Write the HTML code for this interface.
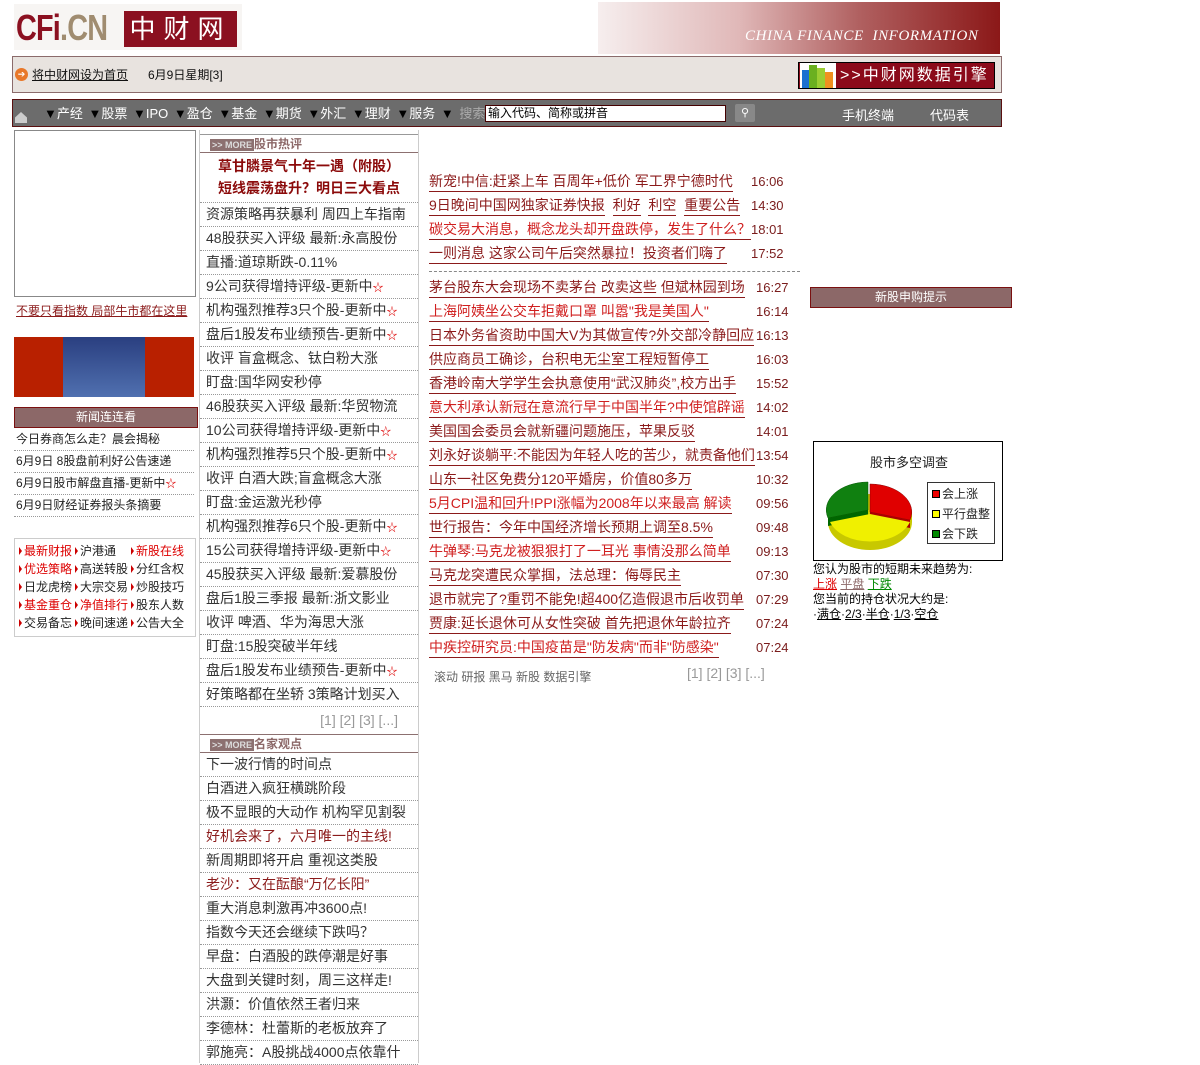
<!DOCTYPE html>
<html><head><meta charset="utf-8">
<style>
*{margin:0;padding:0;box-sizing:border-box}
body{width:1200px;height:1063px;background:#fff;position:relative;overflow:hidden;font-family:"Liberation Sans","WenQuanYi Zen Hei","Noto Sans CJK SC",sans-serif;color:#222}
.a{position:absolute}
a{color:inherit;text-decoration:none}
.mid div.r{height:24px;line-height:23px;border-bottom:1px dotted #999;font-size:14px;padding-left:6px;white-space:nowrap;overflow:hidden;color:#333}
.star{color:#d00;font-size:11px}
.news div{height:24px;position:relative;font-size:14px;white-space:nowrap}
.news span.t{border-bottom:1px solid #8b1a1a;color:#8b1a1a;line-height:20px;display:inline-block}
.news span.t.red{color:#d02020}
.news span.tm{position:absolute;left:322px;top:0;color:#7a1c1c;font-size:13px;line-height:22px}
.left div.r{height:22px;line-height:21px;border-bottom:1px dotted #999;font-size:12px;padding-left:2px;white-space:nowrap;color:#222}
.hd{background:#8c6868;color:#fff;text-align:center;font-size:12px;border:1px solid #7a1010}
.more{display:inline-block;background:#8c7070;color:#ddd;font-size:9px;font-weight:bold;padding:0 2px;line-height:12px;vertical-align:middle}
.mh{height:19px;border-bottom:1px solid #8c7070;border-top:1px solid #999;font-size:12px;font-weight:bold;color:#8c6868;padding-left:10px;line-height:18px}
.lk span{display:inline-block;width:56px;font-size:12px;line-height:18px;white-space:nowrap}
.lk i{display:inline-block;width:0;height:0;border-top:4px solid transparent;border-bottom:4px solid transparent;border-left:3px solid #c00;margin-right:2px}
</style></head><body>
<!-- logo -->
<div class="a" style="left:14px;top:4px;width:228px;height:46px;background:#f7f5f3"></div>
<div class="a" style="left:16px;top:8px;font:bold 36px 'Liberation Sans',sans-serif;letter-spacing:-1px;line-height:40px;transform:scaleX(.8);transform-origin:left"><span style="color:#8b1020">CFi</span><span style="color:#a08c70">.CN</span></div>
<div class="a" style="left:124px;top:11px;width:113px;height:36px;background:#8b1020;color:#fff;font:26px 'WenQuanYi Zen Hei',sans-serif;line-height:36px;text-align:center;letter-spacing:8px">中财网</div>
<!-- banner -->
<div class="a" style="left:598px;top:2px;width:402px;height:52px;background:linear-gradient(90deg,#f6eeee 0%,#e0b8b8 35%,#b06060 65%,#8b1818 100%)"></div>
<div class="a" style="left:745px;top:28px;font:italic 15px 'Liberation Serif',serif;color:#fff;letter-spacing:0.6px;white-space:nowrap">CHINA FINANCE&nbsp; INFORMATION</div>
<!-- top bar -->
<div class="a" style="left:12px;top:56px;width:990px;height:37px;background:#e8e3df;border:1px solid #8b6b6b"></div>
<div class="a" style="left:15px;top:68px;width:13px;height:13px;border-radius:50%;background:#e8782a;color:#fff;font-size:9px;line-height:13px;text-align:center">➔</div>
<div class="a" style="left:32px;top:66px;font-size:12px;text-decoration:underline;color:#111">将中财网设为首页</div>
<div class="a" style="left:148px;top:66px;font-size:12px;color:#111">6月9日星期[3]</div>
<div class="a" style="left:798px;top:62px;width:197px;height:27px;background:#8b0a1a;border:1px solid #000"></div>
<div class="a" style="left:800px;top:63px;width:36px;height:25px;background:#fff"></div>
<div class="a" style="left:802px;top:70px;width:7px;height:18px;background:#1a70d0"></div>
<div class="a" style="left:809px;top:65px;width:8px;height:23px;background:#6ab020"></div>
<div class="a" style="left:817px;top:68px;width:8px;height:20px;background:#9acd32"></div>
<div class="a" style="left:825px;top:72px;width:8px;height:16px;background:#f09020"></div>
<div class="a" style="left:840px;top:65px;color:#fff;font-size:16px;letter-spacing:2px;line-height:22px">&gt;&gt;中财网数据引擎</div>
<!-- nav -->
<div class="a" style="left:12px;top:99px;width:990px;height:28px;background:#6c6c6c;border:1px solid #5a1010"></div>
<div class="a" style="left:15px;top:112px;width:12px;height:11px;background:#ccc;clip-path:polygon(50% 0,100% 50%,100% 100%,0 100%,0 50%)"></div>
<div class="a" style="left:44px;top:106px;color:#fff;font-size:13px;line-height:16px;word-spacing:2px;white-space:nowrap"><span style="color:#000">▼</span>产经 <span style="color:#000">▼</span>股票 <span style="color:#000">▼</span>IPO <span style="color:#000">▼</span>盈仓 <span style="color:#000">▼</span>基金 <span style="color:#000">▼</span>期货 <span style="color:#000">▼</span>外汇 <span style="color:#000">▼</span>理财 <span style="color:#000">▼</span>服务 <span style="color:#000">▼</span> <span style="color:#aaa">搜索:</span></div>
<div class="a" style="left:485px;top:105px;width:241px;height:17px;background:#fff;border:1px solid #400;font-size:12px;line-height:15px;padding-left:2px;color:#000">输入代码、简称或拼音</div>
<div class="a" style="left:735px;top:104px;width:20px;height:18px;background:#888;border-radius:2px;color:#fff;font-size:11px;text-align:center;line-height:18px">&#9906;</div>
<div class="a" style="left:842px;top:105px;color:#fff;font-size:13px">手机终端</div>
<div class="a" style="left:930px;top:105px;color:#fff;font-size:13px">代码表</div>

<!-- left column -->
<div class="a" style="left:14px;top:130px;width:182px;height:167px;border:1px solid #888"></div>
<div class="a" style="left:16px;top:302px;font-size:12px;color:#8b1a1a;text-decoration:underline">不要只看指数 局部牛市都在这里</div>
<div class="a" style="left:14px;top:337px;width:180px;height:60px;background:#b82000"></div>
<div class="a" style="left:63px;top:337px;width:82px;height:60px;background:linear-gradient(180deg,#2a3f80,#5070b0)"></div>
<div class="a hd" style="left:14px;top:407px;width:184px;height:21px;line-height:19px">新闻连连看</div>
<div class="a left" style="left:14px;top:429px;width:180px">
<div class="r">今日券商怎么走？晨会揭秘</div>
<div class="r">6月9日 8股盘前利好公告速递</div>
<div class="r">6月9日股市解盘直播-更新中<span class="star">☆</span></div>
<div class="r">6月9日财经证券报头条摘要</div>
<div class="r"></div>
</div>
<div class="a lk" style="left:14px;top:538px;width:182px;height:99px;border:1px solid #ccc;padding:3px 0 0 4px">
<span style="color:#d00"><i></i>最新财报</span><span><i></i>沪港通</span><span style="color:#d00"><i></i>新股在线</span>
<span style="color:#d00"><i></i>优选策略</span><span><i></i>高送转股</span><span><i></i>分红含权</span>
<span><i></i>日龙虎榜</span><span><i></i>大宗交易</span><span><i></i>炒股技巧</span>
<span style="color:#d00"><i></i>基金重仓</span><span style="color:#d00"><i></i>净值排行</span><span><i></i>股东人数</span>
<span><i></i>交易备忘</span><span><i></i>晚间速递</span><span><i></i>公告大全</span>
</div>

<!-- middle column -->
<div class="a" style="left:199px;top:130px;width:1px;height:933px;background:#ccc"></div>
<div class="a" style="left:418px;top:130px;width:1px;height:933px;background:#ccc"></div>
<div class="a mid" style="left:200px;top:134px;width:218px">
<div class="mh"><span class="more">&gt;&gt; MORE</span>股市热评</div>
<div style="text-align:center;font-size:14px;font-weight:bold;color:#8b0a0a;line-height:22px;padding-top:2px;border-bottom:1px dotted #999;height:50px">草甘膦景气十年一遇（附股）<br>短线震荡盘升？明日三大看点</div>
<div class="r">资源策略再获暴利 周四上车指南</div>
<div class="r">48股获买入评级 最新:永高股份</div>
<div class="r">直播:道琼斯跌-0.11%</div>
<div class="r">9公司获得增持评级-更新中<span class="star">☆</span></div>
<div class="r">机构强烈推荐3只个股-更新中<span class="star">☆</span></div>
<div class="r">盘后1股发布业绩预告-更新中<span class="star">☆</span></div>
<div class="r">收评 盲盒概念、钛白粉大涨</div>
<div class="r">盯盘:国华网安秒停</div>
<div class="r">46股获买入评级 最新:华贸物流</div>
<div class="r">10公司获得增持评级-更新中<span class="star">☆</span></div>
<div class="r">机构强烈推荐5只个股-更新中<span class="star">☆</span></div>
<div class="r">收评 白酒大跌;盲盒概念大涨</div>
<div class="r">盯盘:金运激光秒停</div>
<div class="r">机构强烈推荐6只个股-更新中<span class="star">☆</span></div>
<div class="r">15公司获得增持评级-更新中<span class="star">☆</span></div>
<div class="r">45股获买入评级 最新:爱慕股份</div>
<div class="r">盘后1股三季报 最新:浙文影业</div>
<div class="r">收评 啤酒、华为海思大涨</div>
<div class="r">盯盘:15股突破半年线</div>
<div class="r">盘后1股发布业绩预告-更新中<span class="star">☆</span></div>
<div class="r">好策略都在坐轿 3策略计划买入</div>
<div style="height:27px;text-align:right;padding-right:20px;color:#999;font-size:14px;line-height:27px">[1] [2] [3] [...]</div>
<div class="mh" style="border-top:1px solid #8c7070"><span class="more">&gt;&gt; MORE</span>名家观点</div>
<div class="r">下一波行情的时间点</div>
<div class="r">白酒进入疯狂横跳阶段</div>
<div class="r">极不显眼的大动作 机构罕见割裂</div>
<div class="r" style="color:#8b1a1a">好机会来了，六月唯一的主线!</div>
<div class="r">新周期即将开启 重视这类股</div>
<div class="r" style="color:#8b1a1a">老沙：又在酝酿“万亿长阳”</div>
<div class="r">重大消息刺激再冲3600点!</div>
<div class="r">指数今天还会继续下跌吗？</div>
<div class="r">早盘：白酒股的跌停潮是好事</div>
<div class="r">大盘到关键时刻，周三这样走!</div>
<div class="r">洪灏：价值依然王者归来</div>
<div class="r">李德林：杜蕾斯的老板放弃了</div>
<div class="r">郭施亮：A股挑战4000点依靠什</div>
</div>

<!-- news column -->
<div class="a news" style="left:429px;top:171px;width:380px">
<div><span class="t">新宠!中信:赶紧上车 百周年+低价 军工界宁德时代</span><span class="tm">16:06</span></div>
<div><span class="t">9日晚间中国网独家证券快报</span>&nbsp;&nbsp;<span class="t">利好</span>&nbsp;&nbsp;<span class="t">利空</span>&nbsp;&nbsp;<span class="t">重要公告</span><span class="tm">14:30</span></div>
<div><span class="t red">碳交易大消息，概念龙头却开盘跌停，发生了什么？</span><span class="tm">18:01</span></div>
<div><span class="t">一则消息 这家公司午后突然暴拉！投资者们嗨了</span><span class="tm">17:52</span></div>
</div>
<div class="a" style="left:429px;top:271px;width:371px;border-top:1px dashed #888"></div>
<div class="a news" style="left:429px;top:277px;width:380px">
<div><span class="t">茅台股东大会现场不卖茅台 改卖这些 但斌林园到场</span><span class="tm" style="left:327px">16:27</span></div>
<div><span class="t red">上海阿姨坐公交车拒戴口罩 叫嚣"我是美国人"</span><span class="tm" style="left:327px">16:14</span></div>
<div><span class="t">日本外务省资助中国大V为其做宣传?外交部冷静回应</span><span class="tm" style="left:327px">16:13</span></div>
<div><span class="t">供应商员工确诊，台积电无尘室工程短暂停工</span><span class="tm" style="left:327px">16:03</span></div>
<div><span class="t">香港岭南大学学生会执意使用“武汉肺炎”,校方出手</span><span class="tm" style="left:327px">15:52</span></div>
<div><span class="t red">意大利承认新冠在意流行早于中国半年?中使馆辟谣</span><span class="tm" style="left:327px">14:02</span></div>
<div><span class="t">美国国会委员会就新疆问题施压，苹果反驳</span><span class="tm" style="left:327px">14:01</span></div>
<div><span class="t">刘永好谈躺平:不能因为年轻人吃的苦少，就责备他们</span><span class="tm" style="left:327px">13:54</span></div>
<div><span class="t">山东一社区免费分120平婚房，价值80多万</span><span class="tm" style="left:327px">10:32</span></div>
<div><span class="t red">5月CPI温和回升!PPI涨幅为2008年以来最高 解读</span><span class="tm" style="left:327px">09:56</span></div>
<div><span class="t">世行报告：今年中国经济增长预期上调至8.5%</span><span class="tm" style="left:327px">09:48</span></div>
<div><span class="t red">牛弹琴:马克龙被狠狠打了一耳光 事情没那么简单</span><span class="tm" style="left:327px">09:13</span></div>
<div><span class="t">马克龙突遭民众掌掴，法总理：侮辱民主</span><span class="tm" style="left:327px">07:30</span></div>
<div><span class="t">退市就完了?重罚不能免!超400亿造假退市后收罚单</span><span class="tm" style="left:327px">07:29</span></div>
<div><span class="t">贾康:延长退休可从女性突破 首先把退休年龄拉齐</span><span class="tm" style="left:327px">07:24</span></div>
<div><span class="t red">中疾控研究员:中国疫苗是"防发病"而非"防感染"</span><span class="tm" style="left:327px">07:24</span></div>
</div>
<div class="a" style="left:434px;top:668px;font-size:12px;color:#666">滚动 研报 黑马 新股 数据引擎</div>
<div class="a" style="left:687px;top:665px;font-size:14px;color:#999">[1] [2] [3] [...]</div>

<!-- right column -->
<div class="a hd" style="left:810px;top:287px;width:202px;height:21px;line-height:19px">新股申购提示</div>
<div class="a" style="left:813px;top:441px;width:190px;height:120px;border:1px solid #000"></div>
<div class="a" style="left:870px;top:452px;font-size:13px;color:#222">股市多空调查</div>
<svg class="a" style="left:824px;top:478px" width="92" height="76" viewBox="0 0 92 76">
<ellipse cx="46" cy="44" rx="42" ry="28" fill="#c8c800"/>
<rect x="4" y="34" width="84" height="10" fill="#c8c800"/>
<path d="M46 34 L46 6 A42 28 0 0 1 86 42 Z" fill="#e00000" stroke="#800" stroke-width=".5"/>
<path d="M46 34 L86 42 L86 50 L46 42Z" fill="#a00"/>
<path d="M44 32 L4 40 A42 28 0 0 1 44 4 Z" fill="#108010" stroke="#050" stroke-width=".5"/>
<path d="M44 32 L4 40 L4 48 L44 40Z" fill="#060"/>
<path d="M46 36 L86 44 A42 28 0 0 1 6 44 Z" fill="#f0f000"/>
</svg>
<div class="a" style="left:927px;top:482px;width:68px;height:62px;border:1px solid #333;font-size:12px;line-height:20px;padding:1px 0 0 4px">
<div><span style="display:inline-block;width:8px;height:8px;background:#e00;border:1px solid #000;margin-right:2px"></span>会上涨</div>
<div><span style="display:inline-block;width:8px;height:8px;background:#ff0;border:1px solid #000;margin-right:2px"></span>平行盘整</div>
<div><span style="display:inline-block;width:8px;height:8px;background:#080;border:1px solid #000;margin-right:2px"></span>会下跌</div>
</div>
<div class="a" style="left:813px;top:562px;font-size:12px;line-height:15px;color:#000">
<div>您认为股市的短期未来趋势为:</div>
<div><u style="color:#d00">上涨</u> <u style="color:#8c6868">平盘</u> <u style="color:#080">下跌</u></div>
<div>您当前的持仓状况大约是:</div>
<div>·<u>满仓</u>·<u>2/3</u>·<u>半仓</u>·<u>1/3</u>·<u>空仓</u></div>
</div>
</body></html>
